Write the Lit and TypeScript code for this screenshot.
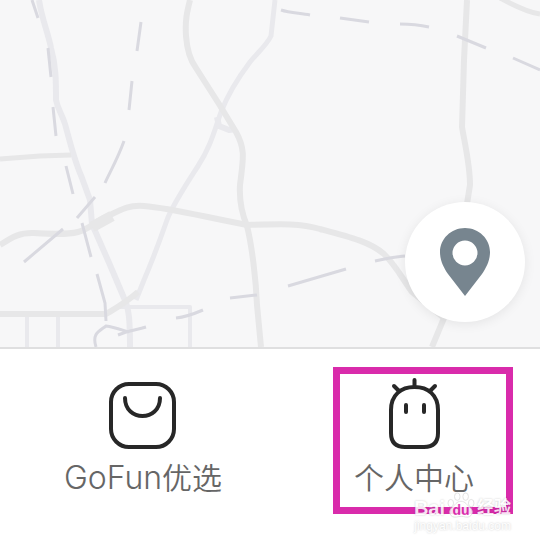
import { LitElement, html, css, svg } from "lit";
import { customElement } from "lit/decorators.js";

const greyRoads: { d: string; w: number }[] = [
  { d: "M190 0C187 12 185 20 186 36C187 50 190 60 196 68L219 104L236 132C246 150 243 160 240 185C239 202 242 214 247 226C252 246 256 280 257 305L261 347", w: 6 },
  { d: "M0 159L40 156L71 155", w: 5 },
  { d: "M0 245C14 236 20 233 32 233C50 234 66 235 78 232C90 229 94 222 108 216C124 208 130 205 144 206C170 208 200 216 247 225C280 224 300 223 320 229C350 237 370 242 384 254C396 266 402 278 412 292L444 318L432 347", w: 6 },
  { d: "M0 314L106 314C116 308 124 304 138 292", w: 6 },
  { d: "M467 0L464 60L462 127C465 145 470 165 470 185L466 210", w: 6 },
  { d: "M500 -2C512 4 525 12 540 14", w: 5 },
  { d: "M92 227L112 216", w: 11 },
];
const paleRoads: { d: string; w: number }[] = [
  { d: "M39 0C42 20 48 32 51 48C56 66 56 80 56 100C58 110 62 114 65 124C70 142 74 160 82 178L90 200L92 224L110 265L124 298C129 308 130 320 130 347", w: 6 },
  { d: "M275 0L271 36C266 46 258 52 250 62C238 78 228 94 221 112C214 132 210 148 198 166C184 188 172 206 167 220C160 240 150 266 144 280L136 300", w: 5 },
  { d: "M119 307L190 307L190 347", w: 4 },
  { d: "M27 316L27 347M58 316L58 347", w: 4 },
  { d: "M217 117L219 126L229 130L236 129", w: 6 },
];
const rails =
  "M32 0L38 18M48 48L51 77M53 107L56 136M66 166L73 194M82 223L91 257M97 274L105 303L106 321" +
  "M141 22L137 51M132 81L129 110M124 141C118 158 110 172 105 183M95 197L77 218M63 229L24 262" +
  "M96 347C92 334 98 332 106 326C114 327 122 330 129 332M118 335C128 331 136 330 146 327" +
  "M176 318C186 317 196 313 203 310M230 298L257 295M288 286L346 269M375 261C384 259 394 257 405 256" +
  "M281 10C290 13 300 13 310 15M340 18L369 22M400 24C410 24 420 25 429 27M457 36L486 48M513 58L540 70";

@customElement("city-map")
class CityMap extends LitElement {
  static styles = css`
    :host { display: block; background: #f7f7f8; overflow: hidden; }
    svg { display: block; width: 100%; height: 100%; }
    .road { fill: none; stroke: #e7e7e8; stroke-linejoin: round; }
    .pale { stroke: #e9e9ed; }
    .rail { fill: none; stroke: #d9d9e0; stroke-width: 3; }
  `;
  render() {
    return html`<svg viewBox="0 0 540 347" preserveAspectRatio="xMidYMid slice" aria-hidden="true">
      ${paleRoads.map((r) => svg`<path class="road pale" d=${r.d} stroke-width=${r.w} />`)}
      ${greyRoads.map((r) => svg`<path class="road" d=${r.d} stroke-width=${r.w} />`)}
      <path class="rail" d=${rails} />
    </svg>`;
  }
}

@customElement("app-root")
class AppRoot extends LitElement {
  static styles = css`
    :host {
      display: flex;
      flex-direction: column;
      min-height: 100vh;
      background: #fff;
      font-family: Inter, "Noto Sans CJK SC", sans-serif;
    }
    button { border: 0; padding: 0; margin: 0; background: none; font: inherit; cursor: pointer; }
    .stage { position: relative; display: grid; flex: 1; min-height: 240px; }
    .locate {
      position: absolute;
      right: 15px;
      bottom: 25px;
      display: grid;
      place-items: center;
      width: 120px;
      height: 120px;
      border-radius: 50%;
      background: #fff;
      box-shadow: 0 2px 12px rgba(0, 0, 0, 0.08);
    }
    .tabs {
      position: relative;
      display: grid;
      grid-template-columns: 1fr 1fr;
      gap: 19px;
      padding: 27px 0 47px 17px;
      border-top: 2px solid #dfdfe0;
    }
    .tab {
      display: flex;
      flex-direction: column;
      align-items: center;
      gap: 8px;
      color: #666;
      font-size: 30px;
      font-weight: 350;
      line-height: 40px;
    }
    .label { display: flex; align-items: baseline; height: 40px; }
    .latin { font-size: 32px; font-weight: 300; }
    .icon { display: block; fill: none; stroke: #272727; stroke-width: 4; stroke-linecap: round; }
    .frame {
      position: absolute;
      top: 18px;
      right: 27px;
      box-sizing: border-box;
      width: 180px;
      height: 147px;
      border: 7px solid #d92bab;
      pointer-events: none;
    }
    .mark {
      position: absolute;
      right: 29px;
      bottom: 11px;
      display: flex;
      flex-direction: column;
      align-items: flex-end;
      color: #fff;
      font-family: "Liberation Sans", "Noto Sans CJK SC", sans-serif;
      font-weight: 700;
      text-shadow: 0 0 2px rgba(0, 0, 0, 0.25);
      opacity: 0.85;
      pointer-events: none;
    }
    .brand { display: flex; align-items: flex-end; gap: 2px; font-size: 20px; line-height: 20px; }
    .pawbox { display: grid; justify-items: center; align-items: end; }
    .pawbox > * { grid-area: 1 / 1; }
    .du { color: #d92bab; text-shadow: none; font-size: 14px; line-height: 16px; }
    .cn { font-size: 17px; }
    .site { font-size: 12px; font-weight: 400; line-height: 16px; }
    .paw { fill: #fff; stroke: #dcdcdc; stroke-width: 1; }
  `;

  render() {
    return html`
      <main class="stage">
        <city-map></city-map>
        <button class="locate" aria-label="定位">
          <svg width="52" height="70" viewBox="0 0 52 70" aria-hidden="true">
            <path fill="#77858f" fill-rule="evenodd" d="M26 1C12 1 1 12 1 25C1 34 5 41 9 47L26 69L43 47C47 41 51 34 51 25C51 12 40 1 26 1ZM26 13.500A12.500 12.500 0 1 1 26 38.500A12.500 12.500 0 1 1 26 13.500Z" />
          </svg>
        </button>
      </main>
      <nav class="tabs">
        <button class="tab">
          <svg class="icon" width="70" height="74" viewBox="0 0 70 74" aria-hidden="true">
            <rect x="3" y="8" width="63" height="63" rx="18" />
            <path d="M17 22C17 46 52 46 52 22" />
          </svg>
          <span class="label"><span class="latin">GoFun</span><span>优选</span></span>
        </button>
        <button class="tab">
          <svg class="icon" width="70" height="74" viewBox="0 0 70 74" aria-hidden="true">
            <path d="M12 34C12 19 22 11 35.500 11C49 11 59 19 59 34V57Q59 71 45 71H26Q12 71 12 57ZM35.500 10V4M20 15L15 10M51 15L56 10M27 29V36M45 29V36" />
          </svg>
          <span class="label">个人中心</span>
        </button>
        <div class="frame"></div>
        <div class="mark">
          <div class="brand">
            <span>Bai</span>
            <span class="pawbox">
              <svg class="paw" width="28" height="26" viewBox="0 0 30 28" aria-hidden="true">
                <ellipse cx="4" cy="12" rx="3" ry="4" />
                <ellipse cx="11" cy="5" rx="3" ry="4" />
                <ellipse cx="20" cy="5" rx="3" ry="4" />
                <ellipse cx="26" cy="12" rx="3" ry="4" />
                <path d="M15 10C10 10 9 14 5 17C1 21 3 28 10 27C14 26 17 26 20 27C27 28 29 21 25 17C21 14 20 10 15 10Z" />
              </svg>
              <span class="du">du</span>
            </span>
            <span class="cn">经验</span>
          </div>
          <span class="site">jingyan.baidu.com</span>
        </div>
      </nav>
    `;
  }
}
